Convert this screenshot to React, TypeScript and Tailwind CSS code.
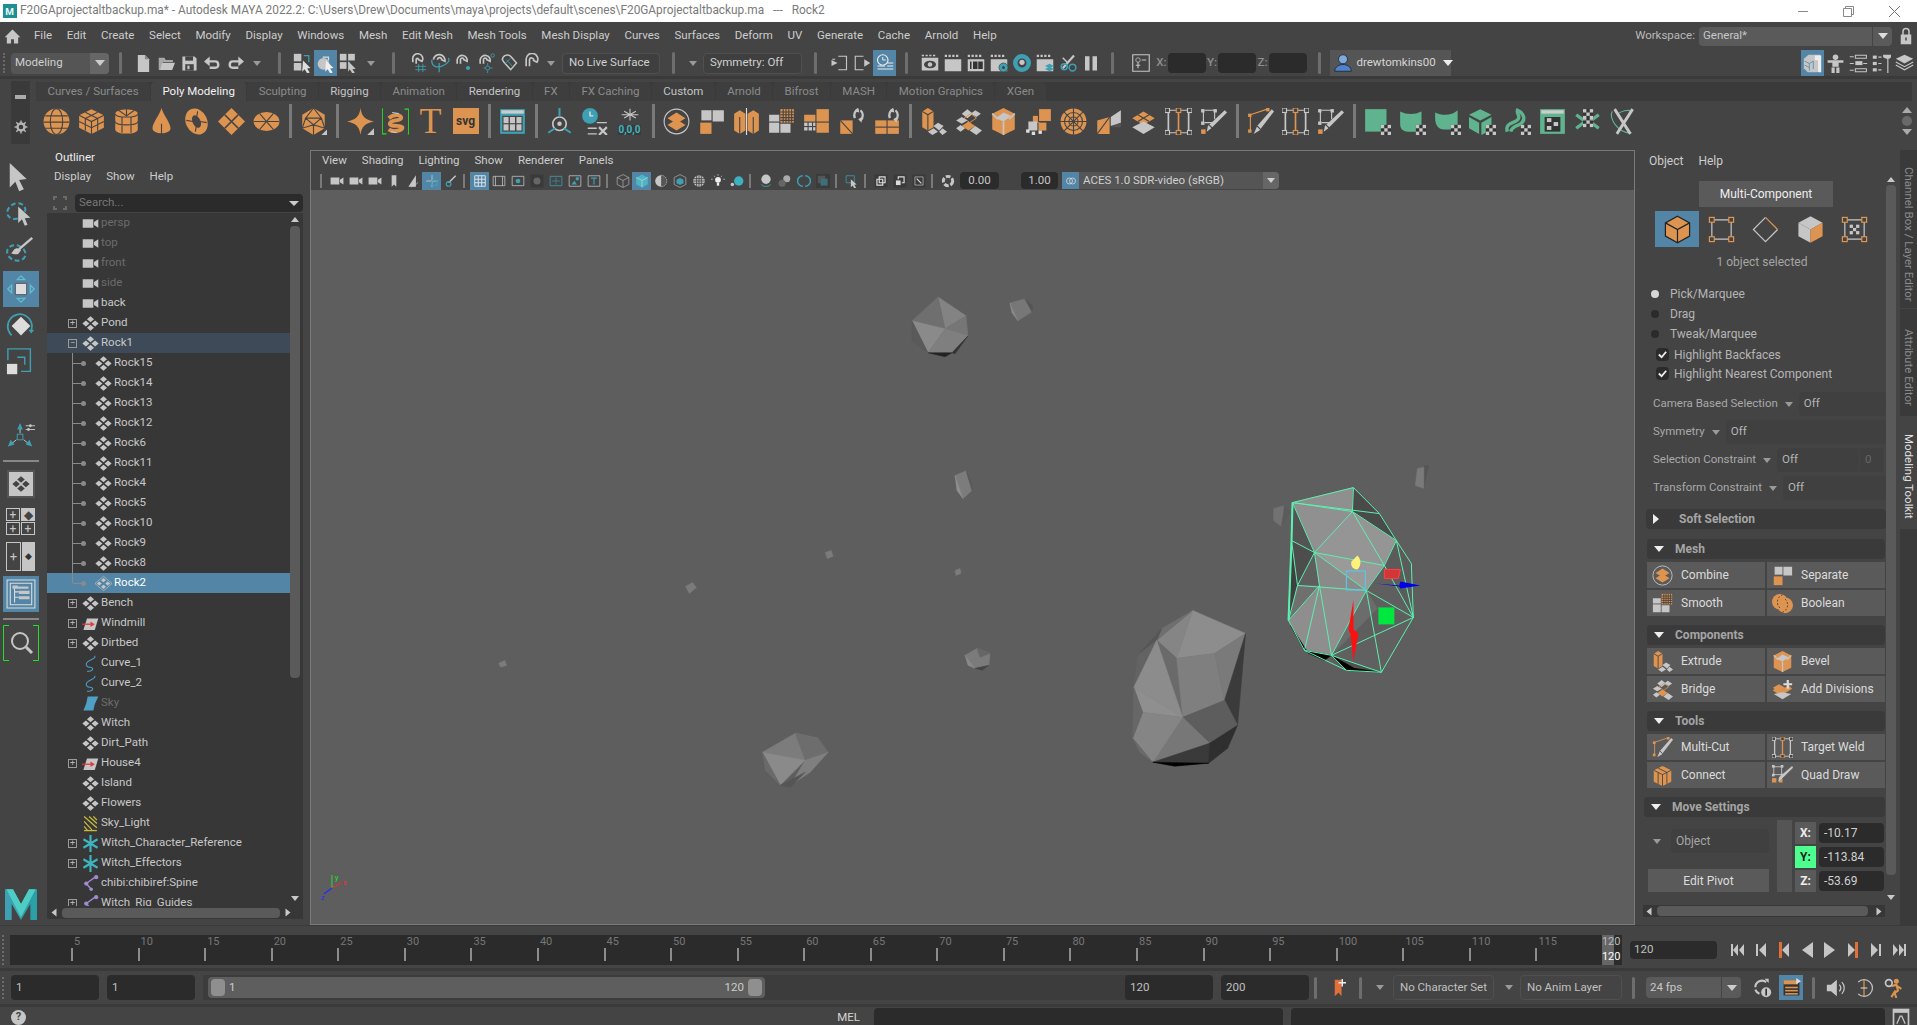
import React from 'react';

const O = '#dd9450';
const G = '#c6c6c6';
const D = '#444444';
const T = '#3ea0b3';
const N = '#5fb38e';

const r = (x: number, y: number, w: number, h: number, f: string) => <rect x={x} y={y} width={w} height={h} fill={f} />;
const ln = (d: string, c = D, w = 1) => <path d={d} stroke={c} strokeWidth={w} fill="none" />;
const fl = (d: string, f = O) => <path d={d} fill={f} />;
const checker = (x: number, y: number) => (
  <>
    {r(x, y, 9, 9, '#333')}
    {r(x, y, 3, 3, G)}{r(x + 6, y, 3, 3, G)}{r(x + 3, y + 3, 3, 3, G)}{r(x, y + 6, 3, 3, G)}{r(x + 6, y + 6, 3, 3, G)}
  </>
);
const corner = <path d="M24 19v5h-5z" fill={G} />;

const ICONS: Record<string, React.ReactNode> = {
  // shelf
  sphere: <><circle cx="12" cy="12" r="11.5" fill={O} /><ellipse cx="12" cy="12" rx="5.5" ry="11.5" fill="none" stroke={D} />{ln('M2 7h20M.5 12.5h23M2 18h20')}</>,
  cube: <>{fl('M12 1 23 6.5v11L12 23 1 17.5v-11z')}{ln('M1 6.5 12 12l11-5.5M12 12v11M6.5 3.7l11 5.6M17.5 3.7 6.5 9.3M6.5 9.3v11M17.5 9.3v11M1 12l11 5.5L23 12')}</>,
  cyl: <>{fl('M2 5c0-5 20-5 20 0v14c0 5-20 5-20 0z')}{ln('M2 5c0 4 20 4 20 0M2 12c0 4 20 4 20 0M8 8v14M16 8v14M12 1v6M5 2l7 5 7-5')}</>,
  cone: <>{fl('M12 0c1.5 6 8 13 8 18 0 6-16 6-16 0 0-5 6.5-12 8-18z')}{ln('M12 14v9')}</>,
  torus: <><ellipse cx="12" cy="12" rx="6.5" ry="9" transform="rotate(-25 12 12)" fill="none" stroke={O} strokeWidth="6" />{ln('M3 11l6 1M13 3l-1 6M21 13l-6-1M11 21l1-6')}</>,
  plane: <>{fl('M12 0 24 12 12 24 0 12z')}{ln('M6 6l12 12M18 6 6 18', D, 1.5)}</>,
  disc: <><ellipse cx="12" cy="12" rx="11.5" ry="8.5" fill={O} />{ln('M.5 12h23M6 5l12 14M18 5 6 19')}</>,
  ico: <>{fl('M12 0 22 6v12l-10 6-10-6V6z')}{ln('M12 0 5 9h14zM5 9 2 18l10-3zM19 9l3 9-10-3zM5 9l7 6 7-6M12 15v9')}{corner}</>,
  star: <>{fl('M12 0c1 7.5 4 10.5 12 12-8 1.5-11 4.5-12 12-1-7.5-4-10.5-12-12C8 10.5 11 7.5 12 0z')}{fl('M24 18v6h-6z', G)}</>,
  helix: <><path d="M1 1H.3v22H4M23 23h.7V1H20" stroke="#22e022" fill="none" /><path d="M6 9c6-5 12-2 11 0-1 3-10 1-10 5 0 3 10 1 11 3 1 3-8 5-12 2" stroke={O} strokeWidth="3.5" fill="none" /><path d="M9 4l6 1M8 21l5 1" stroke={G} fill="none" /></>,
  table: <>{r(1, 1, 22, 22, T)}{r(2, 2, 20, 3, '#ccc')}{r(3, 7, 18, 14, '#444')}{r(4, 8, 4.5, 5.5, G)}{r(9.7, 8, 4.5, 5.5, G)}{r(15.5, 8, 4.5, 5.5, G)}{r(4, 14.5, 4.5, 5.5, G)}{r(9.7, 14.5, 4.5, 5.5, G)}{r(15.5, 14.5, 4.5, 5.5, G)}</>,
  locator: <><circle cx="12" cy="14" r="6" fill="none" stroke={G} strokeWidth="1.5" /><circle cx="12" cy="14" r="2" fill={G} />{ln('M12 0v8M2 22l6-4M22 22l-6-4', T, 1.8)}</>,
  clockx: <><circle cx="8" cy="7" r="7" fill={T} />{ln('M8 3v4h3', '#ddd', 1.3)}{ln('M14 13h9M6 18h8M6 23h8', G, 1.3)}{ln('M16 17l7 7M23 17l-7 7', G, 2)}</>,
  snow: <>{ln('M12 1v14M5 4l14 8M19 4 5 12M2 8h20', G, 1.3)}</>,
  combine: <><circle cx="12" cy="12" r="11" fill="none" stroke={G} />{fl('M12 4l8 5-8 5-8-5z')}{fl('M12 10l8 5-8 5-8-5z')}</>,
  separate: <>{r(13, 2, 10, 10, G)}{r(3, 2, 9, 9, G)}{r(2, 13, 10, 10, O)}</>,
  mirror: <>{fl('M6 2l5 3v15l-5 3-5-3V5z')}{fl('M18 2l5 3v15l-5 3-5-3V5z')}{ln('M6 8v15M18 8v15')}{ln('M12 0v24', '#ddd', 1)}</>,
  smooth: <>{r(11, 1, 12, 12, O)}{ln('M13.5 1v12M16 1v12M18.5 1v12M21 1v12M11 3.5h12M11 6h12M11 8.5h12M11 11h12')}{r(1, 13, 9, 9, G)}{r(11, 14, 9, 8, G)}{r(1, 6, 9, 6, G)}</>,
  reduce: <>{r(12, 1, 11, 11, O)}{r(1, 6, 10, 6, O)}{r(12, 13, 11, 9, O)}{r(1, 13, 3, 3, G)}{r(5, 13, 3, 3, G)}{r(1, 17, 3, 3, G)}{r(5, 17, 3, 3, G)}{r(9, 13, 2, 3, G)}{r(9, 17, 2, 3, G)}</>,
  tri: <>{fl('M2 11h11v12H2z')}{ln('M2 11l11 12')}{ln('M15 9a6 6 0 0 1 3-8M20 2a6 6 0 0 1 0 9', G, 2)}{fl('M18 10l3 3v-5zM18 0l-3 3 4 1z', G)}</>,
  quads: <>{r(2, 11, 10, 12, O)}{r(13, 11, 10, 12, O)}{ln('M2 17h21')}{ln('M15 9a6 6 0 0 1 3-8M20 2a6 6 0 0 1 0 9', G, 2)}{fl('M18 10l3 3v-5zM18 0l-3 3 4 1z', G)}</>,
  extrude: <>{fl('M2 3l5-3 5 3v14l-5 3-5-3z')}{ln('M2 3l5 3 5-3M7 6v14')}{fl('M12 16l4-3 5 3-4 4zM7 21l5-3 4 3-5 3zM17 21l3-3 4 3-4 3z', G)}</>,
  bridge: <>{fl('M6 5l5-4 5 4-5 4zM14 5l4-3 5 3-4 3z', G)}{ln('M8 9l6-4 5 4-6 4z', O, 0.8)}{fl('M1 11l5-3 5 3-5 3z', G)}{fl('M6 16l6-4 6 4-6 4z')}{fl('M1 18l4-3 4 3-4 3zM13 20l5-4 6 4-5 4z', G)}</>,
  bevel: <>{fl('M12 0l10 5v14l-10 5-10-5V5z')}{fl('M12 4l7 3-7 5-7-3z', G)}{ln('M12 12v12M2 5l5 5M22 5l-5 5', G, 1.5)}</>,
  append: <>{r(12, 1, 11, 11, O)}{r(7, 7, 6, 6, O)}{r(3, 12, 8, 8, G)}{r(12, 13, 7, 7, O)}{ln('M12 1v11h11')}{r(1, 19, 3, 3, '#ddd')}{r(6, 21, 3, 3, '#ddd')}{r(12, 20, 3, 3, '#ddd')}</>,
  circ: <><circle cx="12" cy="12" r="11.5" fill={O} />{ln('M12 0v24M0 12h24M3.5 3.5l17 17M20.5 3.5l-17 17')}<circle cx="12" cy="12" r="4" fill="none" stroke={D} /><circle cx="12" cy="12" r="8" fill="none" stroke={D} /></>,
  fill: <>{fl('M2 11l11-3v15H2z')}{ln('M2 23 13 8')}{fl('M14 8l9-6v11l-9 3z', G)}{fl('M14 17h9V13z', '#555')}</>,
  addDiv: <>{fl('M12 3l10 6-10 6-10-6z')}{ln('M7 6l10 6M17 6 7 12')}{fl('M12 12l10 5-10 6-10-6z', G)}</>,
  weld: <>{ln('M3 3v18M21 3v18', G, 1.5)}{ln('M12 3v18', O, 1.5)}{ln('M2 2h20M2 22h20', G, 1)}{[2, 12, 22].map((x) => <g key={x}><rect x={x - 2} y="0" width="4" height="4" fill={D} stroke={x === 12 ? O : G} /><rect x={x - 2} y="20" width="4" height="4" fill={D} stroke={x === 12 ? O : G} /></g>)}</>,
  quad: <>{ln('M4 2h9M4 13h9', G, 1)}{ln('M3 3v10M13 3v7', G, 1)}{r(1, 1, 3, 3, G)}{r(12, 1, 3, 3, G)}{r(1, 12, 3, 3, G)}{r(1, 19, 4, 4, O)}{fl('M22 2l2 2-14 14-4 3 1-5z', G)}{ln('M8 15l3 3', D, 1)}</>,
  cut: <>{ln('M3 6v15M3 6l15-5', O, 1)}{r(1, 5, 3, 3, O)}{r(1, 19, 3, 3, O)}{r(17, 0, 3, 3, O)}{fl('M24 3l-2-2L9 16l-3 7 5-3z', G)}{ln('M9 16l3 3', D, 1)}</>,
  connect: <>{fl('M12 1l10 5v13l-10 5-10-5V6z')}{ln('M2 6l10 5 10-5M12 11v13M7 3.5l10 5M7 8.5v13M17 8.5v13')}</>,
  green1: <>{fl('M1 1h19v20H1z', N)}{checker(15, 15)}</>,
  green2: <>{fl('M1 3c6 3 13 3 19 0v18H8c-5 0-7-3-7-7z', N)}{checker(15, 15)}</>,
  green3: <>{fl('M1 4c6 3 15 3 20-2v17H9C4 19 1 15 1 9z', N)}{checker(15, 15)}</>,
  green4: <>{fl('M10 1l10 5-10 5L0 6z', N)}{fl('M0 8l9 5v10l-9-5zM11 13l9-5v8h-5v6l-4 2z', N)}{checker(15, 15)}</>,
  green5: <><path d="M3 21C0 12 12 14 13 9c1-3-2-4-1-7 5 2 8 8 3 12-3 2-8 2-9 7" stroke={N} strokeWidth="3" fill="none" />{checker(15, 15)}</>,
  green6: <>{r(1, 1, 22, 22, N)}{r(2, 2, 20, 3, '#ccc')}{r(5, 8, 14, 13, '#333')}{r(7, 9, 4, 3.5, G)}{r(13, 12.5, 4, 3.5, G)}{r(7, 16, 4, 3.5, G)}</>,
  green7: <>{ln('M2 6l8 6-8 6M22 6l-8 6 8 6', N, 3)}{checker(8, 8)}{checker(8, 1)}</>,
  green8: <><path d="M3 3C-1 8 8 23 20 22M20 3c-3-2-9 0-12 2" stroke={N} fill="none" />{ln('M5 1l14 22M21 1 7 23', G, 2.5)}</>,
  // status
  newf: <>{fl('M4 0h10l6 6v18H4z', G)}{fl('M14 0l6 6h-6z', '#888')}</>,
  open: <>{fl('M1 4h8l2 3h10v3H7l-3 11H1z', '#a8a8a8')}{fl('M6 11h18l-4 10H3z', G)}</>,
  save: <>{fl('M2 2h17l3 3v17H2z', G)}{r(6, 2, 11, 6, '#444')}{r(6, 13, 12, 9, '#444')}{r(9, 15, 3, 5, G)}</>,
  undo: <>{ln('M3 9h13c5 0 6 9 0 9H8', G, 3.5)}{fl('M8 2v14L0 9z', G)}</>,
  redo: <>{ln('M21 9H8c-5 0-6 9 0 9h8', G, 3.5)}{fl('M16 2v14l8-7z', G)}</>,
  sel1: <>{r(1, 1, 9, 9, G)}{r(1, 12, 9, 9, G)}{ln('M13 3h6v8', T, 1.5)}{fl('M12 9l9 9-4 .5 3 5-3 1-3-5-3 3z', '#ddd')}</>,
  sel2: <><circle cx="9" cy="13" r="7" fill={G} />{ln('M8 5h7v4', '#ddd', 1.5)}{fl('M12 9l9 9-4 .5 3 5-3 1-3-5-3 3z', '#eee')}</>,
  sel3: <>{r(1, 1, 8, 8, G)}{r(11, 1, 8, 8, G)}{r(1, 11, 8, 8, G)}{r(11, 11, 2, 2, T)}{fl('M11 10l9 9-4 .5 3 4-3 1-3-5-2 3z', G)}</>,
  mag1: <>{ln('M7 11V8a6 6 0 1 1 11 2l-4-2a1.5 1.5 0 1 0-3 0v5', G, 2)}{ln('M14 13v10M19 13v10M10 16h13M10 20h13', T, 1)}</>,
  mag2: <>{ln('M4 8a7 7 0 1 1 14 2L14 8a1.5 1.5 0 1 0-5 0', G, 2)}<path d="M2 8c0 10 8 10 14 7s8-6 6-9M11 12v11" stroke={T} fill="none" strokeWidth="1.5" /></>,
  mag3: <>{ln('M5 13V8a6 6 0 1 1 12 2l-4-2a2 2 0 1 0-4 0v5', G, 2)}<circle cx="18" cy="18" r="2.5" fill={T} /></>,
  mag4: <>{ln('M5 13V8a6 6 0 1 1 12 2l-4-2a2 2 0 1 0-4 0v5', G, 2)}<circle cx="20" cy="3" r="2" fill="none" stroke={T} /><circle cx="14" cy="18" r="2.5" fill="none" stroke={T} />{ln('M14 15v-3M14 21v3M9 18h2M17 18h3', T, 1)}</>,
  mag5: <>{ln('M4 8a6 6 0 0 1 10-4l7 8-7 8-8-9z', G, 1.8)}{ln('M9 8l8 9M14 6l-7 7', T, 1)}</>,
  mag6: <>{ln('M5 16V8a7 7 0 1 1 13 3l-4-2a2.5 2.5 0 1 0-5-1v8', G, 2)}</>,
  hist1: <>{ln('M11 3h11v18H11M3 7h4', G, 1.5)}{fl('M2 8l8 4-8 4z', G)}</>,
  hist2: <>{ln('M14 3H3v18h11', G, 1.5)}{fl('M15 7l8 5-8 5z', G)}</>,
  hist3: <><circle cx="9" cy="8" r="7" fill="none" stroke="#eee" strokeWidth="1.5" />{ln('M9 4v4h4', '#eee', 1.3)}{ln('M15 12h8M15 16h8M2 20h21M2 16h10', '#eee', 1.5)}</>,
  rv1: <>{r(1, 5, 22, 17, G)}{r(1, 1, 3, 2, G)}{r(6, 1, 3, 2, G)}{r(11, 1, 3, 2, G)}{r(16, 1, 3, 2, G)}<ellipse cx="12" cy="14" rx="8" ry="5" fill="#444" /><circle cx="12" cy="14" r="3" fill={G} /></>,
  rv2: <>{r(1, 7, 22, 16, G)}{r(1, 1, 3, 3, G)}{r(6, 1, 3, 3, G)}{r(11, 1, 3, 3, G)}{r(16, 1, 3, 3, G)}</>,
  rv3: <>{r(1, 7, 22, 16, G)}{r(1, 1, 3, 3, G)}{r(6, 1, 3, 3, G)}{r(11, 1, 3, 3, G)}{r(16, 1, 3, 3, G)}{r(4, 10, 2, 10, '#333')}{r(8, 10, 6, 10, '#333')}{r(15, 10, 6, 10, '#333')}</>,
  rv4: <>{r(1, 7, 22, 16, G)}{r(1, 1, 3, 3, G)}{r(6, 1, 3, 3, G)}{r(11, 1, 3, 3, G)}{r(16, 1, 3, 3, G)}<circle cx="18" cy="18" r="6" fill={T} stroke="#444" /><circle cx="18" cy="18" r="2" fill="#444" /></>,
  rv5: <><circle cx="12" cy="12" r="9" fill="none" stroke={T} strokeWidth="6" /><circle cx="12" cy="11" r="3.5" fill={G} /></>,
  rv6: <>{r(1, 7, 22, 16, G)}{r(1, 1, 3, 3, G)}{r(6, 1, 3, 3, G)}{r(11, 1, 3, 3, G)}{r(16, 1, 3, 3, G)}{fl('M18 13l6 3-6 3-6-3z', T)}{fl('M18 17l6 3-6 3-6-3z', T)}</>,
  rv7: <>{ln('M5 19 20 2', G, 3)}{ln('M5 5l6 6', G, 2)}<circle cx="7" cy="17" r="4" fill="none" stroke={T} strokeWidth="2" /><circle cx="18" cy="18" r="4.5" fill="none" stroke={T} strokeWidth="2" /></>,
  pause: <>{r(4, 3, 6, 19, G)}{r(14, 3, 6, 19, G)}</>,
  sn: <>{ln('M1 1h22v22H1z', G, 1.5)}<circle cx="8" cy="8" r="3" fill="none" stroke={G} />{ln('M8 11v8M5 15h6M13 8h6', G, 1.5)}</>,
  user: <><circle cx="12" cy="7" r="6" fill="#7ea9d9" stroke="#123" /><path d="M1 23c0-6 6-9 11-9s11 3 11 9z" fill="#4f82c8" stroke="#123" /></>,
  cb: <>{fl('M1 6l6-5h15v18l-4 4H6l-5-5z', G)}{fl('M15 2h8v6h-8zM19 8h4v15h-4z', '#eee')}{ln('M2 9l6 3v9M2 14l6 3M8 12l5-3v10', '#5285a6', 1)}</>,
  person: <><circle cx="12" cy="4" r="3.5" fill={G} />{fl('M2 8h20v3h-6v5H8v-5H2z', G)}{r(7, 17, 4, 7, G)}{r(13, 17, 4, 7, G)}</>,
  ae: <>{ln('M8 1.5h14v4H8zM8 18.5h14v4H8z', G, 1.3)}{ln('M1 3.5h5M1 20.5h5M1 12h5M18 12h5', G, 1.3)}<rect x="8" y="9" width="9" height="5" fill={G} /></>,
  te: <>{r(1, 2, 5, 4, G)}{r(1, 10, 5, 4, G)}{r(1, 18, 5, 4, G)}{ln('M8 4h4M8 12h4M8 20h4M20 2v22', G, 1.5)}{fl('M14 1h10v3l-2 2h-4l-4-2z', G)}</>,
  layers: <>{fl('M12 1l11 5-11 6L1 6z', G)}{ln('M1 10l11 6 11-6M1 14l11 6 11-6', G, 1.5)}</>,
  // toolbox
  arrow: <>{fl('M4 0l18 17-8 1 5 10-5 2-4-10-6 6z', G)}</>,
  lasso: <><ellipse cx="11" cy="13" rx="10" ry="8" transform="rotate(-25 11 13)" fill="none" stroke={T} strokeWidth="2.2" strokeDasharray="5 3" />{fl('M13 8l13 12-6 .5 3 7-3 1-3-7-4 4z', G)}</>,
  paint: <><ellipse cx="11" cy="17" rx="10" ry="8" transform="rotate(20 11 17)" fill="none" stroke={T} strokeWidth="2.2" strokeDasharray="5 3" />{ln('M14 13 28 1', G, 2.5)}{fl('M8 14c3-3 6-2 8 0l-3 4c-2 1-6 0-8-1 1 0 2-1 3-3z', G)}</>,
  move: <>{r(10, 10, 12, 12, '#ddd')}{ln('M10 10h12v12H10z', '#555')}{ln('M12 6l4-4 4 4zM12 26l4 4 4-4zM6 12l-4 4 4 4zM26 12l4 4-4 4z', '#63bccd', 1.5)}</>,
  rotate: <>{fl('M16 6l10 10-10 10L6 16z', '#ddd')}<path d="M6 26A13 13 0 1 1 27 21" fill="none" stroke={T} strokeWidth="1.8" />{fl('M24 20h6l-3 4z', T)}</>,
  scale: <>{r(1, 18, 11, 11, '#ddd')}{ln('M2 14V2h24v24H16', T, 1.5)}{ln('M12 11h8v8', T, 1.5)}</>,
  soft: <><rect x="12" y="13" width="6" height="6" fill="none" stroke={T} />{ln('M15 12V4M11 19l-6 5M19 19l6 5', G, 1)}{fl('M15 1l3 7h-6zM2 26l3-7 4 5zM28 26l-3-7-4 5z', T)}{ln('M21 4h10M21 8h10', G, 1)}<circle cx="26" cy="4" r="1.5" fill={G} /><circle cx="24" cy="8" r="1.5" fill={G} /></>,
  m: <>{fl('M0 24V1h6l6 11v12L5 12v12z', T)}{fl('M24 24V1h-6l-6 11v12l7-12v12z', '#2a9fa8')}{fl('M6 1l6 11 6-11h5L12 22 1 1z', '#4ecdc4')}</>,
  xf: <g transform="translate(0 1.8) scale(1 .85)">{fl('M12 0l5 5-5 5-5-5zM5.500 7 10.500 12l-5 5-5-5zM18.500 7l5 5-5 5-5-5zM12 14l5 5-5 5-5-5z', G)}</g>,
  xfsel: <g transform="translate(0 1.8) scale(1 .85)"><path d="M12 0 24 12 12 24 0 12z" fill="none" stroke={G} />{fl('M12 3l3.5 3.5L12 10 8.5 6.5zM6 8.5 9.5 12 6 15.5 2.5 12zM18 8.5 21.5 12 18 15.5 14.5 12zM12 14l3.5 3.5L12 21l-3.5-3.5z', G)}</g>,
  camera: <>{r(1, 6, 15, 12, G)}{fl('M17 10l6-4v12l-6-4z', G)}</>,
  ref: <>{fl('M7 5h16l-5 16H2z', G)}{ln('M0 13h13', '#e23a3a', 1.8)}{fl('M12 9l6 4-6 4z', '#e23a3a')}</>,
  curve: <path d="M18 1c3 5-12 6-12 12s8 3 9 6-4 4-8 4" fill="none" stroke="#4f9fc6" strokeWidth="1.5" />,
  nurbs: <path d="M8 2h15l-5 11-2 9H2l4-10z" fill="#4f9fc6" />,
  light: <>{ln('M3 2l18 16M10 2l11 10M3 9l11 12M3 16l5 6M16 2l5 5', '#c9bb3c', 1.8)}{ln('M3 22h18', '#c9bb3c', 1.8)}</>,
  star6: <>{ln('M12 0v24M2 6l20 12M22 6 2 18', '#3fb5c0', 3)}</>,
  joint: <><path d="M20 2 6 12l7 8" fill="none" stroke="#a08bd0" strokeWidth="2" /><circle cx="20" cy="3" r="3" fill="#a08bd0" /><circle cx="6" cy="12" r="3" fill="#a08bd0" /><circle cx="13" cy="20" r="2.5" fill="#a08bd0" /></>,
  // modeling toolkit
  mtObj: <>{fl('M12 1l10 5.5v11L12 23 2 17.5v-11z')}<path d="M2 6.5 12 12l10-5.5M12 12v11M12 1 22 6.5v11L12 23 2 17.5v-11z" fill="none" stroke="#222" /></>,
  mtVert: <>{ln('M4 4h16v16H4z', G, 1)}{[[4, 4], [20, 4], [4, 20], [20, 20]].map(([x, y]) => <rect key={`${x}${y}`} x={x - 2} y={y - 2} width="4" height="4" fill={D} stroke={O} strokeWidth="1" />)}</>,
  mtEdge: <>{ln('M12 2 2 12l10 10 10-10', G, 1)}{ln('M12 2l10 10', O, 1)}</>,
  mtFace: <>{fl('M12 1l10 5.5L12 12 2 6.5z', G)}{fl('M2 6.5 12 12v11L2 17.5z', G)}{fl('M22 6.5 12 12v11l10-5.5z')}</>,
  mtUv: <>{ln('M4 4h16v16H4z', G, 1)}{[[4, 4], [20, 4], [4, 20], [20, 20]].map(([x, y]) => <rect key={`${x}${y}`} x={x - 2} y={y - 2} width="4" height="4" fill={D} stroke={O} strokeWidth="1" />)}{r(8, 8, 2.7, 2.7, G)}{r(13.3, 8, 2.7, 2.7, G)}{r(10.7, 10.7, 2.7, 2.7, G)}{r(8, 13.3, 2.7, 2.7, G)}{r(13.3, 13.3, 2.7, 2.7, G)}</>,
  boolean: <><circle cx="9" cy="10" r="9" fill={O} /><circle cx="15" cy="14" r="9" fill={O} /><path d="M12 2a9 9 0 0 0-3 15M12 22a9 9 0 0 0 3-15" stroke="#333" strokeDasharray="2 2" fill="none" /></>,
  addDivPlus: <>{fl('M8 6l7 4-7 5-7-5z')}{fl('M10 13l9-6 4 4-13 8-9-6 2-2z', O)}{fl('M12 15l10 2-10 6L2 17z', G)}{ln('M18 1v10M13 6h10', '#ddd', 2.5)}</>,
  quadDraw: <>{ln('M2 2h9v9H2z', G, 1)}{r(0, 0, 3, 3, G)}{r(10, 0, 3, 3, G)}{r(0, 10, 3, 3, G)}{r(10, 10, 3, 3, G)}{r(0, 15, 5, 5, O)}{r(8, 16, 4, 4, O)}{fl('M23 1l1 2-13 13-4 3 1-5z', G)}</>,
  // playback
  bookmark: <>{fl('M5 1h9v22l-4-5-5 5z', '#e0703a')}{ln('M15 0v10M10 5h10', '#eee', 2)}</>,
  loop: <>{ln('M4 11a8 8 0 0 1 13-6M4 14a8 8 0 0 0 5 5', G, 2.5)}{fl('M15 1h5v5z', G)}<circle cx="17" cy="17" r="6" fill={G} />{ln('M17 13v8', '#333', 2)}</>,
  cache: <>{r(2, 4, 20, 18, '#333')}{r(2, 3, 18, 5, O)}{r(4, 11, 16, 2, O)}{r(4, 15, 16, 2, O)}{r(4, 19, 16, 2, O)}{fl('M18 0l6 4-6 4z', '#ddd')}</>,
  speaker: <>{fl('M1 8h5l7-6v20l-7-6H1z', G)}{ln('M16 8a6 6 0 0 1 0 8M19 5a10 10 0 0 1 0 14', G, 1.5)}</>,
  clockdash: <><path d="M5 5a10 10 0 1 1 0 14" fill="none" stroke={G} strokeWidth="1.5" />{ln('M12 2v20', O, 1.5)}{ln('M8 12h8', G, 1.5)}</>,
  runner: <><circle cx="16" cy="4" r="3" fill={O} />{ln('M10 10l6-2 2 7-4 3 2 6M15 15l-5 8M16 9l6 4', O, 2.5)}<circle cx="7" cy="6" r="4" fill="none" stroke={G} strokeWidth="2" /></>,
  // viewport panel
  bm: fl('M8 2h8v20l-4-4-4 4z', G),
  film: <>{fl('M4 22 17 2v20z', G)}{ln('M8 22c6 0 10-3 12-8', G, 1)}</>,
  mv: <>{ln('M12 2v20M2 12h20', G, 1.5)}<circle cx="16" cy="15" r="5" fill="none" stroke={T} strokeWidth="2" /></>,
  paintv: <>{ln('M8 15 20 3', G, 2.5)}<circle cx="8" cy="17" r="4" fill="none" stroke={T} strokeWidth="2" /></>,
  grid: <>{ln('M3 3h18v18H3zM9 3v18M15 3v18M3 9h18M3 15h18', '#eee', 1.5)}</>,
  film2: <>{ln('M2 4h20v16H2zM6 4v16M18 4v16', G, 1.3)}</>,
  dot: <>{ln('M2 4h20v16H2z', G, 1.3)}<circle cx="12" cy="12" r="4" fill={T} /></>,
  dot2: <>{r(1, 1, 22, 22, '#3a3a3a')}<circle cx="12" cy="12" r="6" fill="#666" /></>,
  tv: <>{ln('M2 4h20v16H2z', T, 1.3)}{ln('M12 6v12M5 12h14', T, 1)}</>,
  cam2: <>{ln('M2 3h20v18H2z', G, 1.3)}{fl('M6 18l5-7 4 7z', T)}<circle cx="16" cy="8" r="3" fill={T} /></>,
  tbox: <>{ln('M2 3h20v18H2z', G, 1.3)}{ln('M7 7h10M12 7v11', T, 2)}</>,
  wire: <>{ln('M12 1l10 5v12l-10 5-10-5V6zM2 6l10 5 10-5M12 11v12', G, 1)}</>,
  solid: <>{fl('M12 1l10 5v12l-10 5-10-5V6z', '#4db4c4')}{ln('M2 6l10 5 10-5M12 11v12', '#ddd', 1)}</>,
  half: <><circle cx="12" cy="12" r="10" fill={G} /><path d="M12 2a10 10 0 0 1 0 20z" fill="#555" stroke={G} strokeDasharray="2 2" /></>,
  wire2: <>{ln('M12 1l10 5v12l-10 5-10-5V6z', G, 1)}{fl('M12 7l6 3v6l-6 3-6-3v-6z', T)}</>,
  chk: <><circle cx="12" cy="12" r="10" fill={G} />{ln('M2 8h20M2 12h20M2 16h20M8 2v20M12 2v20M16 2v20', '#444', 1.5)}</>,
  bulb: <><circle cx="12" cy="10" r="5" fill="#eee" />{r(10, 15, 4, 5, '#eee')}{ln('M12 0v3M3 9H0M24 9h-3M5 3l2 2M19 3l-2 2', G, 1.3)}</>,
  sph: <><circle cx="15" cy="12" r="8" fill="#3fb0c0" /><circle cx="4" cy="18" r="3" fill={G} /></>,
  ball: <><circle cx="12" cy="9" r="8" fill={G} />{ln('M4 18l4 3h8l4-3', T, 1.5)}</>,
  ball2: <><circle cx="15" cy="8" r="6" fill="#aaa" /><circle cx="7" cy="16" r="6" fill="#666" /></>,
  ring: <><path d="M10 3a9 9 0 0 0 0 18M14 3a9 9 0 0 1 0 18" fill="none" stroke={T} strokeWidth="2.5" /></>,
  sq: <>{r(0, 0, 24, 24, '#3a3a3a')}{r(3, 3, 13, 13, '#555')}{r(8, 8, 12, 12, '#3e6e7a')}</>,
  selc: <>{ln('M2 3h14v12H2z', T, 1.3)}{fl('M10 9l10 9-4 .5 3 5-3 1-3-5-3 3z', G)}</>,
  pg1: <>{r(1, 1, 22, 22, '#3a3a3a')}{ln('M9 5h10v10H9zM5 9h10v10H5z', '#ddd', 2)}</>,
  pg2: <>{r(1, 1, 22, 22, '#3a3a3a')}{r(5, 11, 8, 8, '#ddd')}{ln('M9 9V5h10v10h-4', '#ddd', 2)}</>,
  pg3: <>{r(1, 1, 22, 22, '#3a3a3a')}{ln('M5 5h14v14H5z', '#ddd', 1)}{ln('M8 8l8 8', '#ddd', 2)}</>,
};

const TOOL_VB: Record<string, string> = { arrow: '0 0 32 32', lasso: '0 0 32 32', paint: '0 0 32 32', move: '0 0 32 32', rotate: '0 0 32 32', scale: '0 0 32 32', soft: '0 0 32 32' };
const Ic = ({ n, s = 24, className = '' }: { n: string; s?: number; className?: string }) => (
  <svg viewBox={TOOL_VB[n] ?? '0 0 24 24'} width={s} height={s} className={`shrink-0 ${className}`}>{ICONS[n]}</svg>
);

const Tri = ({ className = '' }: { className?: string }) => (
  <span className={`block w-0 h-0 shrink-0 border-x-[4px] border-t-[5px] border-x-transparent border-t-[#9a9a9a] ${className}`} />
);
const Sep = ({ className = '' }: { className?: string }) => (
  <span className={`block shrink-0 w-[3px] h-[22px] rounded-sm bg-[#6e6e6e] ${className}`} />
);
const Grip = ({ className = '' }: { className?: string }) => (
  <span className={`block shrink-0 w-[3px] border-l-2 border-dotted border-[#6a6a6a] ${className}`} />
);
const Cells = ({ names, w = 'w-[23px]', s = 20, sel = -1 }: { names: string[]; w?: string; s?: number; sel?: number }) => (
  <>
    {names.map((n, i) => (
      <span key={n + i} className={`flex items-center justify-center shrink-0 h-[26px] ${w} ${i === sel ? 'bg-[#5285a6]' : ''}`}>
        <Ic n={n} s={s} />
      </span>
    ))}
  </>
);

const MENUS = ['File', 'Edit', 'Create', 'Select', 'Modify', 'Display', 'Windows', 'Mesh', 'Edit Mesh', 'Mesh Tools', 'Mesh Display', 'Curves', 'Surfaces', 'Deform', 'UV', 'Generate', 'Cache', 'Arnold', 'Help'];

const TitleBar = () => (
  <div className="flex items-center h-[22px] bg-white shrink-0 pl-[3px]">
    <svg viewBox="0 0 24 24" width="14" height="14"><rect width="24" height="24" fill="#1e8f92" /><text x="4" y="18" fontSize="17" fontWeight="700" fill="#e8fbfa" fontFamily="Roboto">M</text></svg>
    <span className="ml-[3px] text-[11.85px] text-[#7a7a7a] whitespace-pre">F20GAprojectaltbackup.ma* - Autodesk MAYA 2022.2: C:\Users\Drew\Documents\maya\projects\default\scenes\F20GAprojectaltbackup.ma   ---   Rock2</span>
    <div className="ml-auto flex items-center">
      <span className="block w-[10px] h-px bg-[#888] mr-[35px]" />
      <svg width="11" height="11" viewBox="0 0 11 11" className="mr-[35px]"><path d="M.5 2.5h8v8h-8zM2.5 2.5v-2h8v8h-2" fill="none" stroke="#888" /></svg>
      <svg width="11" height="11" viewBox="0 0 11 11" className="mr-[17px]"><path d="M0 0l11 11M11 0 0 11" stroke="#777" /></svg>
    </div>
  </div>
);

const MenuBar = () => (
  <div className="flex items-center h-[28px] shrink-0 pl-[4px]">
    <svg viewBox="0 0 24 24" width="17" height="17"><path d="M12 2 1 13h3v9h6v-6h4v6h6v-9h3z" fill="#c6c6c6" /></svg>
    <div className="ml-[13px] flex gap-[14.7px]">
      {MENUS.map((m) => <span key={m}>{m}</span>)}
    </div>
    <span className="ml-auto text-[#b9b9b9]">Workspace:</span>
    <div className="ml-[4px] flex items-center justify-between w-[193px] h-[19px] rounded-sm bg-[#5a5a5a] pl-[4px] text-[#c8c8c8]">
      General*
      <span className="flex items-center justify-center w-[20px] h-full border-l border-[#444]"><Tri className="border-t-[#ddd] border-x-[5px] border-t-[6px]" /></span>
    </div>
    <svg viewBox="0 0 24 24" width="18" height="18" className="ml-[5px] mr-[2px]"><path d="M8 11V6a4 4 0 0 1 8 0v5" stroke="#c6c6c6" strokeWidth="2" fill="none" /><rect x="5" y="10" width="14" height="13" fill="#c6c6c6" /><rect x="11" y="14" width="2" height="4" fill="#444" /></svg>
  </div>
);

const StatusInput = ({ children, w }: { children: React.ReactNode; w: string }) => (
  <span className={`flex items-center h-[21px] pl-[6px] rounded-sm border border-[#505050] bg-[#3f3f3f] text-[#cfcfcf] ${w}`}>{children}</span>
);

const StatusLine = () => (
  <div className="flex items-center h-[26px] shrink-0 border-b-[3px] border-[#3a3a3a] box-content">
    <Grip className="ml-[3px] h-[20px]" />
    <div className="ml-[5px] flex items-center justify-between w-[98px] h-[21px] rounded-sm bg-[#555] pl-[4px] text-[#cfcfcf]">
      Modeling
      <span className="flex items-center justify-center w-[19px] h-full bg-[#666] rounded-r-sm"><Tri className="border-t-[#ccc] border-x-[5px] border-t-[6px]" /></span>
    </div>
    <Sep className="ml-[10px]" />
    <span className="ml-[10px] flex items-center"><Cells names={['newf', 'open', 'save', 'undo', 'redo']} s={17} /></span>
    <Tri className="ml-[6px]" />
    <Sep className="ml-[17px]" />
    <span className="ml-[10px] flex items-center"><Cells names={['sel1', 'sel2', 'sel3']} s={20} sel={1} /></span>
    <Tri className="ml-[7px]" />
    <Sep className="ml-[17px]" />
    <span className="ml-[10px] flex items-center"><Cells names={['mag1', 'mag2', 'mag3', 'mag4', 'mag5', 'mag6']} s={20} /></span>
    <Tri className="ml-[4px]" />
    <span className="ml-[7px]"><StatusInput w="w-[98px]">No Live Surface</StatusInput></span>
    <Sep className="ml-[12px]" />
    <Tri className="ml-[14px]" />
    <span className="ml-[6px]"><StatusInput w="w-[99px]">Symmetry: Off</StatusInput></span>
    <Sep className="ml-[12px]" />
    <span className="ml-[10px] flex items-center"><Cells names={['hist1', 'hist2', 'hist3']} s={18} sel={2} /></span>
    <Sep className="ml-[9px]" />
    <span className="ml-[10px] flex items-center"><Cells names={['rv1', 'rv2', 'rv3', 'rv4', 'rv5', 'rv6', 'rv7', 'pause']} s={18} /></span>
    <Sep className="ml-[9px]" />
    <span className="ml-[18px] mr-[5px]"><Ic n="sn" s={18} /></span>
    {['X:', 'Y:', 'Z:'].map((a) => (
      <span key={a} className="flex items-center w-[50.5px] justify-end text-[#8e8e8e] font-medium gap-[1px]">
        {a}<span className="block w-[38px] h-[20px] rounded-sm bg-[#2b2b2b]" />
      </span>
    ))}
    <Sep className="ml-[11px]" />
    <div className="ml-[9px] flex items-center gap-[5px] w-[121px] h-[26px] bg-[#555] pl-[4px] text-[#d5d5d5]">
      <Ic n="user" s={18} />drewtomkins00<Tri className="border-t-[#eee] border-x-[5px] border-t-[6px] ml-[2px]" />
    </div>
    <div className="ml-auto mr-[1px] flex items-center">
      <Cells names={['cb', 'person', 'ae', 'te', 'layers']} s={19} sel={0} />
    </div>
  </div>
);

const TABS: [string, number][] = [['Curves / Surfaces', 0], ['Poly Modeling', 2], ['Sculpting', 0], ['Rigging', 1], ['Animation', 0], ['Rendering', 1], ['FX', 0], ['FX Caching', 0], ['Custom', 1], ['Arnold', 0], ['Bifrost', 0], ['MASH', 0], ['Motion Graphics', 0], ['XGen', 0]];

const SH = ({ names }: { names: string[] }) => <Cells names={names} w="w-[35px]" s={27} />;
const ShSep = () => <span className="block shrink-0 w-[3px] h-[34px] bg-[#7a7a7a] mx-[4.5px]" />;

const Shelf = () => (
  <div className="flex h-[71px] shrink-0 pt-[1px]">
    <div className="ml-[11px] mt-[1px] flex flex-col items-center justify-between w-[19px] h-[63px] bg-[#3a3a3a] pt-[14px] pb-[10px]">
      <span className="block w-[11px] h-[4px] bg-[#aaa]" />
      <svg viewBox="0 0 24 24" width="14" height="14"><circle cx="12" cy="12" r="6" fill="none" stroke="#b5b5b5" strokeWidth="4" /><path d="M12 1v5M12 18v5M1 12h5M18 12h5M4 4l4 4M16 16l4 4M20 4l-4 4M8 16l-4 4" stroke="#b5b5b5" strokeWidth="2.5" /></svg>
    </div>
    <div className="flex-1 min-w-0 ml-[6px] flex flex-col">
      <div className="flex items-end h-[19px] mr-[5px] mt-[2px] bg-[#3a3a3a] gap-[1px]">
        {TABS.map(([t, s]) => (
          <span key={t} className={`flex items-center h-[19px] px-[11.4px] rounded-t-sm ${s === 2 ? 'bg-[#444] text-[#f2f2f2]' : s === 1 ? 'bg-[#3e3e3e] text-[#c4c4c4]' : 'bg-[#3e3e3e] text-[#8b8b8b]'}`}>{t}</span>
        ))}
      </div>
      <div className="flex items-center h-[40px] ml-[3px]">
        <SH names={['sphere', 'cube', 'cyl', 'cone', 'torus', 'plane', 'disc']} />
        <ShSep />
        <SH names={['ico']} />
        <ShSep />
        <Cells names={['star', 'helix']} w="w-[35px]" s={27} />
        <span className="flex items-center justify-center w-[35px] text-[36px] leading-none font-['Liberation_Serif'] text-[#dd9450]">T</span>
        <span className="flex items-center justify-center w-[35px]"><span className="flex items-center justify-center w-[26px] h-[26px] bg-[#dd9450] text-[#333] text-[12px] font-bold">svg</span></span>
        <ShSep />
        <SH names={['table']} />
        <ShSep />
        <SH names={['locator', 'clockx']} />
        <span className="flex flex-col items-center w-[35px]"><Ic n="snow" s={20} /><span className="text-[10px] leading-[10px] font-bold text-[#3fb5c0] bg-[#3a3a3a] -mt-[3px]">0,0,0</span></span>
        <ShSep />
        <SH names={['combine', 'separate', 'mirror', 'smooth', 'reduce', 'tri', 'quads']} />
        <ShSep />
        <SH names={['extrude', 'bridge', 'bevel', 'append', 'circ', 'fill', 'addDiv', 'weld', 'quad']} />
        <ShSep />
        <SH names={['cut', 'weld', 'quad']} />
        <ShSep />
        <SH names={['green1', 'green2', 'green3', 'green4', 'green5', 'green6', 'green7', 'green8']} />
        <div className="ml-auto mr-[5px] flex flex-col items-center gap-[3px]">
          <Tri className="rotate-180 border-t-[#aaa] border-x-[5px] border-t-[6px]" />
          <span className="block w-[10px] h-[10px] rounded-full bg-[#6a6a6a]" />
          <Tri className="border-t-[#aaa] border-x-[5px] border-t-[6px]" />
        </div>
      </div>
    </div>
  </div>
);

const TCell = ({ n, sel, mt }: { n: string; sel?: boolean; mt: string }) => (
  <span className={`flex items-center justify-center w-[36px] h-[36px] shrink-0 ${mt} ${sel ? 'bg-[#5285a6]' : ''}`}><Ic n={n} s={30} /></span>
);

const Toolbox = () => (
  <div className="flex flex-col items-center w-[41px] shrink-0 pt-[10px]">
    <TCell n="arrow" mt="" />
    <TCell n="lasso" mt="" />
    <TCell n="paint" mt="mt-[2px]" />
    <TCell n="move" sel mt="mt-[1px]" />
    <TCell n="rotate" mt="mt-[1px]" />
    <TCell n="scale" mt="" />
    <TCell n="soft" mt="mt-[39px]" />
    <span className="block w-[36px] h-[2px] bg-[#888] mt-[5px]" />
    <span className="flex items-center justify-center w-[28px] h-[28px] mt-[8px] bg-[#c6c6c6] border-2 border-[#555]"><Ic n="xf" s={18} className="[&_path]:fill-[#444]" /></span>
    <div className="grid grid-cols-2 gap-[1px] mt-[10px] w-[29px]">
      {[0, 1, 2, 3].map((i) => (
        <span key={i} className={`flex items-center justify-center h-[13px] border border-[#c6c6c6] text-[12px] leading-none ${i === 1 ? 'bg-[#c6c6c6] text-[#444]' : 'text-[#c6c6c6]'}`}>{i === 1 ? '◆' : '+'}</span>
      ))}
    </div>
    <div className="flex mt-[7px] w-[29px] h-[29px] gap-[1px]">
      <span className="flex-1 flex items-center justify-center border border-[#c6c6c6] text-[#c6c6c6] text-[13px]">+</span>
      <span className="flex-1 flex items-center justify-center bg-[#c6c6c6] text-[#333] text-[9px]">◆</span>
    </div>
    <span className="flex items-center justify-center w-[36px] h-[36px] bg-[#5285a6] mt-[5px]">
      <svg viewBox="0 0 28 28" width="30" height="30"><path d="M1 1h26v26H1zM4 4h20v20H4z" fill="none" stroke="#ddd" /><path d="M8 8v14M8 12h4M8 17h4" stroke="#ddd" /><path d="M6 6h5v3H6zM9 7h12v2H9zM12 11h10v3H12zM12 16h10v3H12z" fill="#c6c6c6" /></svg>
    </span>
    <span className="block w-[36px] h-[2px] bg-[#888] mt-[6px]" />
    <span className="flex items-center justify-center w-[36px] h-[36px] mt-[5px]">
      <svg viewBox="0 0 36 36" width="36" height="36"><path d="M6 .5H.5v35H6M30 .5h5.5v35H30" stroke="#22e022" fill="none" /><circle cx="17" cy="16" r="8" fill="none" stroke="#c6c6c6" strokeWidth="2" /><path d="M23 22l6 6" stroke="#c6c6c6" strokeWidth="3" /></svg>
    </span>
    <Ic n="m" s={32} className="mt-auto mb-[5px]" />
  </div>
);

type Row = { t: string; ic: string; dim?: boolean; box?: '+' | '-'; child?: boolean; sel?: 1 | 2; last?: boolean };
const ROWS: Row[] = [
  { t: 'persp', ic: 'camera', dim: true },
  { t: 'top', ic: 'camera', dim: true },
  { t: 'front', ic: 'camera', dim: true },
  { t: 'side', ic: 'camera', dim: true },
  { t: 'back', ic: 'camera' },
  { t: 'Pond', ic: 'xf', box: '+' },
  { t: 'Rock1', ic: 'xf', box: '-', sel: 1 },
  ...['Rock15', 'Rock14', 'Rock13', 'Rock12', 'Rock6', 'Rock11', 'Rock4', 'Rock5', 'Rock10', 'Rock9', 'Rock8'].map((t) => ({ t, ic: 'xf', child: true })),
  { t: 'Rock2', ic: 'xfsel', child: true, sel: 2, last: true },
  { t: 'Bench', ic: 'xf', box: '+' },
  { t: 'Windmill', ic: 'ref', box: '+' },
  { t: 'Dirtbed', ic: 'xf', box: '+' },
  { t: 'Curve_1', ic: 'curve' },
  { t: 'Curve_2', ic: 'curve' },
  { t: 'Sky', ic: 'nurbs', dim: true },
  { t: 'Witch', ic: 'xf' },
  { t: 'Dirt_Path', ic: 'xf' },
  { t: 'House4', ic: 'ref', box: '+' },
  { t: 'Island', ic: 'xf' },
  { t: 'Flowers', ic: 'xf' },
  { t: 'Sky_Light', ic: 'light' },
  { t: 'Witch_Character_Reference', ic: 'star6', box: '+' },
  { t: 'Witch_Effectors', ic: 'star6', box: '+' },
  { t: 'chibi:chibiref:Spine', ic: 'joint' },
  { t: 'Witch_Rig_Guides', ic: 'joint', box: '+' },
];

const OutlinerRow = ({ row }: { row: Row }) => (
  <div className={`flex items-center h-[20px] shrink-0 w-[244px] ${row.sel === 2 ? 'bg-[#5285a6] text-white' : row.sel === 1 ? 'bg-[#3f4a58]' : ''} ${row.dim ? 'text-[#6c6c6c]' : ''}`}>
    {row.child ? (
      <>
        <span className={`ml-[25px] w-[1px] bg-[#8a8a8a] ${row.last ? 'h-[10px] self-start' : 'h-[20px]'}`} />
        <span className="block w-[9px] h-px bg-[#8a8a8a]" />
        <span className="block w-[5px] h-[5px] rounded-full bg-[#8a8a8a] -ml-px" />
        <Ic n={row.ic} s={17} className="ml-[9px] mr-[2px]" />
      </>
    ) : (
      <>
        {row.box ? (
          <span className="ml-[21px] flex items-center justify-center w-[9px] h-[9px] border border-[#9a9a9a] text-[9px] leading-none text-[#b5b5b5]">{row.box === '+' ? '+' : '−'}</span>
        ) : <span className="ml-[21px] w-[9px]" />}
        <Ic n={row.ic} s={17} className="ml-[5px] mr-[2px]" />
      </>
    )}
    <span className="whitespace-nowrap">{row.t}</span>
  </div>
);

const Outliner = () => (
  <div className="flex flex-col w-[263px] ml-[3px] shrink-0">
    <span className="flex items-center w-[63px] h-[16px] ml-[1px] bg-[#444] text-[#eee] pl-[10px]">Outliner</span>
    <div className="flex-1 min-h-0 flex flex-col bg-[#444]">
      <div className="flex items-center h-[22px] shrink-0 pl-[10px] gap-[15px]"><span>Display</span><span>Show</span><span>Help</span></div>
      <div className="flex items-center h-[18px] mt-[6px] shrink-0">
        <svg viewBox="0 0 16 16" width="16" height="16" className="ml-[8px]"><path d="M2 5V2h3M11 2h3v3M14 11v3h-3M5 14H2v-3" stroke="#6a6a6a" strokeWidth="2" fill="none" /></svg>
        <div className="ml-[7px] w-[228px] h-[18px] rounded-sm bg-[#2b2b2b] flex items-center justify-between px-[4px] text-[#777]">Search...<Tri className="border-t-[#ccc] border-x-[5px] border-t-[5px]" /></div>
      </div>
      <div className="flex-1 min-h-0 flex mt-[1px] ml-[3px] mr-[4px] bg-[#373737]">
        <div className="flex-1 min-w-0 flex flex-col overflow-hidden text-[#c8c8c8]">
          {ROWS.map((row) => <OutlinerRow key={row.t} row={row} />)}
        </div>
        <div className="flex flex-col items-center w-[10px] mr-[3px]">
          <Tri className="rotate-180 mt-[4px] border-t-[#c8c8c8]" />
          <span className="block w-[10px] h-[452px] mt-[4px] rounded-t bg-[#5a5a5a] rounded-b" />
          <Tri className="mt-auto mb-[5px] border-t-[#c8c8c8]" />
        </div>
      </div>
      <div className="flex items-center h-[13px] ml-[3px] mr-[4px] shrink-0 bg-[#373737] pl-[3px]">
        <Tri className="rotate-90 border-t-[#c8c8c8]" />
        <span className="block ml-[4px] w-[218px] h-[10px] rounded bg-[#5a5a5a]" />
        <Tri className="-rotate-90 ml-[4px] border-t-[#c8c8c8]" />
      </div>
      <div className="h-[6px] shrink-0" />
    </div>
  </div>
);

const V_GROUPS: { n: string[]; sel?: number[] }[] = [
  { n: ['camera', 'camera', 'camera', 'bm', 'film', 'mv', 'paintv'], sel: [5] },
  { n: ['grid', 'film2', 'dot', 'dot2', 'tv', 'cam2', 'tbox'], sel: [0] },
  { n: ['wire', 'solid', 'half', 'wire2', 'chk', 'bulb', 'sph'], sel: [1] },
  { n: ['ball', 'ball2', 'ring', 'sq'] },
  { n: ['selc'] },
  { n: ['pg1', 'pg2', 'pg3'] },
];

type Poly = [string, string];
const BIG: Poly[] = [
  ['1193,610 1246,633 1215,653 1177,658', '#8d8d8d'], ['1157,640 1193,610 1177,658', '#858585'], ['1162,628 1193,610 1157,640', '#6f6f6f'],
  ['1138,655 1162,628 1157,640', '#565656'], ['1138,655 1157,640 1134,687', '#636363'], ['1157,640 1177,658 1183,717', '#6a6a6a'],
  ['1157,640 1183,717 1134,687', '#8c8c8c'], ['1134,687 1183,717 1143,712', '#8f8f8f'], ['1177,658 1215,653 1225,700 1183,717', '#7f7f7f'],
  ['1215,653 1246,633 1225,700', '#7a7a7a'], ['1246,633 1238,725 1225,700', '#3b3b3b'], ['1225,700 1238,725 1210,743 1183,717', '#5d5d5d'],
  ['1183,717 1210,743 1153,762', '#777777'], ['1143,712 1183,717 1153,762 1133,738', '#858585'], ['1134,687 1143,712 1133,738', '#676767'],
  ['1133,738 1153,762 1140,752', '#6a6a6a'], ['1153,762 1210,743 1209,763', '#3a3a3a'], ['1210,743 1238,725 1228,748 1209,763', '#2f2f2f'],
  ['1153,762 1209,763 1175,766', '#000000'],
];
const SEL: Poly[] = [
  ['1293,502 1354,487 1353,511', '#8f8f8f'], ['1293,502 1353,511 1315,552', '#909090'], ['1353,511 1397,540 1385,565 1315,552', '#959595'],
  ['1354,487 1380,513 1397,540 1353,511', '#4a4a4a'], ['1315,552 1385,565 1367,590', '#9a9a9a'], ['1315,552 1367,590 1320,585', '#8a8a8a'],
  ['1320,585 1367,590 1332,655', '#8f8f8f'], ['1320,585 1332,655 1305,650 1289,620', '#8e8e8e'], ['1292,540 1315,552 1298,585', '#4d4d4d'],
  ['1293,502 1315,552 1292,540', '#545454'], ['1292,540 1298,585 1289,620', '#3f3f3f'], ['1298,585 1320,585 1289,620', '#707070'],
  ['1397,540 1412,563 1414,617 1385,565', '#5b5b5b'], ['1367,590 1385,565 1414,617 1378,608', '#5f5f5f'], ['1332,655 1367,590 1378,608', '#6c6c6c'],
  ['1332,655 1414,617 1382,672', '#606060'], ['1332,655 1382,672 1347,670', '#505050'], ['1291,625 1305,650 1332,655 1325,660 1309,653', '#000'], ['1332,655 1355,668 1382,672 1347,670', '#000'],
];
const WIRE = 'M1293 502 1354 487 1380 513 1397 540 1412 563 1414 617 1382 672 1347 670 1305 650 1289 620 1292 540 1293 502M1293 502 1380 513M1354 487 1353 511 1397 540M1293 502 1353 511 1315 552 1293 502M1315 552 1385 565 1397 540M1353 511 1385 565 1367 590 1332 655 1382 672M1315 552 1367 590M1298 585 1367 590 1414 617 1332 655M1292 540 1315 552 1298 585 1289 620 1320 585 1332 655 1305 650M1315 552 1320 585M1385 565 1414 617M1397 540 1414 617M1298 585 1292 540M1320 585 1305 650M1367 590 1382 672M1332 655 1347 670';

const rock = (pts: Poly[], k: string) => pts.map(([p, f], i) => <polygon key={k + i} points={p} fill={f} stroke={f} strokeWidth="0.5" />);
const ROCKS: Poly[] = [
  ['938,296 966,315 945,328', '#838383'], ['938,296 945,328 912,320', '#6f6f6f'], ['966,315 968,335 945,328', '#767676'], ['912,320 945,328 928,352', '#8a8a8a'],
  ['945,328 968,335 952,352 928,352', '#7f7f7f'], ['912,320 928,352 912,340', '#5a5a5a'], ['968,335 955,353 952,352', '#333'], ['928,352 952,352 945,356', '#222'],
  ['1010,302 1025,298 1032,311 1018,320', '#777'], ['1025,298 1033,305 1032,311', '#555'], ['1010,302 1018,320 1012,312', '#8a8a8a'],
  ['955,475 966,470 972,490 963,498', '#7c7c7c'], ['955,475 963,498 957,490', '#8f8f8f'], ['966,470 972,482 972,490', '#5a5a5a'],
  ['1418,468 1430,465 1425,488 1416,485', '#7a7a7a'], ['1425,465 1430,465 1425,488', '#555'],
  ['1274,508 1285,505 1292,512 1282,526 1274,520', '#727272'], ['1285,505 1292,512 1282,526', '#5b5b5b'],
  ['825,552 831,550 833,556 827,558', '#7b7b7b'], ['955,570 960,568 961,573 956,575', '#7c7c7c'],
  ['685,586 692,582 696,587 689,593', '#7b7b7b'], ['498,663 504,660 506,665 500,667', '#7c7c7c'],
  ['965,655 977,648 990,653 989,665 975,668', '#7b7b7b'], ['965,655 975,668 968,665', '#8a8a8a'], ['977,648 990,653 980,657', '#666'], ['975,668 989,665 982,670', '#444'],
  ['762,752 795,733 818,738 805,760', '#7c7c7c'], ['795,733 818,738 828,752 805,760', '#6d6d6d'], ['762,752 805,760 780,785', '#8a8a8a'],
  ['805,760 828,752 810,772 790,785', '#7f7f7f'], ['762,752 780,785 765,770', '#6a6a6a'], ['780,785 805,772 790,787', '#555'],
];

const Viewport = () => (
  <div className="flex-1 min-w-0 ml-[3px] flex flex-col border border-[#7a7a7a] mr-[3px] relative">
    <div className="flex items-center h-[20px] shrink-0 pl-[11px] gap-[15px]">
      {['View', 'Shading', 'Lighting', 'Show', 'Renderer', 'Panels'].map((m) => <span key={m}>{m}</span>)}
    </div>
    <div className="flex items-center h-[19px] shrink-0 pl-[6px]">
      {V_GROUPS.map((g, i) => (
        <React.Fragment key={i}>
          <span className="block w-[2px] h-[14px] bg-[#7a7a7a] mr-[5px] ml-[3px]" />
          {g.n.map((n, j) => (
            <span key={j} className={`flex items-center justify-center w-[19px] h-[18px] ${g.sel?.includes(j) ? 'bg-[#5285a6]' : ''}`}><Ic n={n} s={14} /></span>
          ))}
        </React.Fragment>
      ))}
      <span className="block w-[2px] h-[14px] bg-[#7a7a7a] mr-[5px] ml-[3px]" />
      <span className="flex items-center justify-center w-[19px]"><svg viewBox="0 0 24 24" width="14" height="14"><circle cx="12" cy="12" r="8" fill="none" stroke="#c6c6c6" strokeWidth="5" strokeDasharray="8 3" /></svg></span>
      <span className="ml-[3px] flex items-center justify-center w-[39px] h-[17px] rounded-sm bg-[#2b2b2b] text-[#c8c8c8]">0.00</span>
      <span className="ml-[22px] flex items-center justify-center w-[37px] h-[17px] rounded-sm bg-[#2b2b2b] text-[#c8c8c8]">1.00</span>
      <div className="ml-[4px] flex items-center justify-between w-[217px] h-[17px] rounded-sm bg-[#555]">
        <span className="flex items-center h-full gap-[4px] text-[#d0d0d0]"><span className="flex items-center justify-center w-[17px] h-full bg-[#5285a6]"><svg viewBox="0 0 16 16" width="12" height="12"><circle cx="6" cy="8" r="4" fill="none" stroke="#ddd" /><circle cx="10" cy="8" r="4" fill="none" stroke="#ddd" /></svg></span>ACES 1.0 SDR-video (sRGB)</span>
        <span className="flex items-center justify-center w-[16px] h-full bg-[#666] rounded-r-sm"><Tri className="border-t-[#ccc]" /></span>
      </div>
    </div>
    <div className="flex-1 min-h-0 bg-[#5e5e5e]">
      <svg viewBox="310 190 1325 733" className="w-full h-full block">
        {rock(ROCKS, 'r')}
        {rock(BIG, 'b')}
        {rock(SEL, 's')}
        <path d={WIRE} fill="none" stroke="#5cf0b0" strokeWidth="1" />
        <path d="M1293 502 1292 540 1289 620" fill="none" stroke="#5cf0b0" strokeWidth="2" />
        <path d="M1358 555c4 4 4 10 0 14-5 0-7-4-6-8z" fill="#fff27a" />
        <rect x="1347" y="570.5" width="19" height="19" fill="none" stroke="#56c8e6" strokeWidth="1.2" />
        <path d="M1354 599v30l5 4-5 28-3-28-2-4z" fill="#ff1010" />
        <path d="M1376 583l24 2 1-4 20 4-20 3-1-2z" fill="#0000e8" />
        <rect x="1379" y="607" width="16" height="17" fill="#00e840" />
        <path d="M1385 569h16l-2 9h-14z" fill="#d33636" stroke="#ff4040" />
        <path d="M331 888v-13" stroke="#28e028" strokeWidth="1" /><path d="M331 888l9-5" stroke="#ff2a2a" strokeWidth="1" /><path d="M331 888l-8 6" stroke="#2a2aff" strokeWidth="1.5" />
        <text x="334" y="880" fontSize="7" fill="#28e028" fontFamily="Roboto">y</text>
        <text x="342" y="885" fontSize="7" fill="#ff2a2a" fontFamily="Roboto">x</text>
        <text x="320" y="900" fontSize="7" fill="#2a2aff" fontFamily="Roboto">z</text>
      </svg>
    </div>
  </div>
);

const SelectRow = ({ label, w, extra }: { label: string; w: string; extra?: boolean }) => (
  <div className="flex items-center h-[24px] mb-[4px] pl-[15px] text-[11.5px]">
    <span className="text-[#a9a9a9] whitespace-nowrap">{label}</span>
    <Tri className="ml-[7px]" />
    <span className={`ml-[6px] flex items-center h-full pl-[5px] rounded-sm bg-[#404040] text-[#b5b5b5] ${w}`}>Off</span>
    {extra && <span className="ml-[1px] flex items-center h-full w-[23px] pl-[5px] bg-[#404040] text-[#666]">0</span>}
  </div>
);

const Header = ({ t, open = true, className = '' }: { t: string; open?: boolean; className?: string }) => (
  <div className={`flex items-center h-[20px] rounded-sm bg-[#3a3a3a] pl-[7px] font-bold text-[#a5a5a5] ${className}`}>
    {open ? <Tri className="border-t-[#eee] border-x-[5px] border-t-[6px]" /> : <span className="block w-0 h-0 border-y-[5px] border-l-[6px] border-y-transparent border-l-[#eee]" />}
    <span className={open ? 'ml-[11px]' : 'ml-[20px]'}>{t}</span>
  </div>
);

const ToolBtn = ({ ic, t }: { ic: string; t: string }) => (
  <div className="flex items-center h-[26px] bg-[#5a5a5a] pl-[5px] gap-[8px] text-[#dcdcdc]"><Ic n={ic} s={21} />{t}</div>
);
const BtnGrid = ({ items }: { items: [string, string][] }) => (
  <div className="grid grid-cols-2 gap-[2px] mt-[3px] mb-[9px] ml-[9px] w-[238px]">
    {items.map(([i, t]) => <ToolBtn key={t} ic={i} t={t} />)}
  </div>
);

const Radio = ({ t, on }: { t: string; on?: boolean }) => (
  <div className="flex items-center h-[20px] pl-[13px] text-[#b5b5b5]">
    <span className={`block w-[8px] h-[8px] rounded-full ${on ? 'bg-[#d8d8d8]' : 'bg-[#2b2b2b]'}`} />
    <span className="ml-[11px]">{t}</span>
  </div>
);
const Check = ({ t }: { t: string }) => (
  <div className="flex items-center h-[19px] pl-[18px] text-[#b5b5b5]">
    <span className="flex items-center justify-center w-[13px] h-[13px] rounded-sm bg-[#2b2b2b]">
      <svg viewBox="0 0 12 12" width="11" height="11"><path d="M2 6l3 3 5-6" stroke="#eee" strokeWidth="2" fill="none" /></svg>
    </span>
    <span className="ml-[5px]">{t}</span>
  </div>
);

const Toolkit = () => (
  <div className="flex flex-col w-[262px] shrink-0 bg-[#444] overflow-hidden text-[12px]">
    <div className="flex items-center h-[27px] shrink-0 pl-[11px] gap-[15px] pb-[6px]"><span>Object</span><span>Help</span></div>
    <div className="flex flex-1 min-h-0">
      <div className="flex-1 min-w-0 flex flex-col">
        <div className="flex items-center justify-center ml-[61px] w-[134px] h-[26px] mt-[4px] shrink-0 bg-[#5a5a5a] text-[#eee]">Multi-Component</div>
        <div className="flex items-center h-[36px] mt-[4px] ml-[17px] shrink-0">
          <span className="flex items-center justify-center w-[44px] h-[36px] bg-[#5285a6]"><Ic n="mtObj" s={29} /></span>
          {['mtVert', 'mtEdge', 'mtFace', 'mtUv'].map((n) => <span key={n} className="flex items-center justify-center w-[44.5px] h-[36px]"><Ic n={n} s={29} /></span>)}
        </div>
        <div className="text-center h-[17px] mt-[6px] shrink-0 text-[#a5a5a5] w-[248px]">1 object selected</div>
        <div className="mt-[14px] shrink-0">
          <Radio t="Pick/Marquee" on />
          <Radio t="Drag" />
          <Radio t="Tweak/Marquee" />
        </div>
        <div className="mt-[1px] shrink-0">
          <Check t="Highlight Backfaces" />
          <Check t="Highlight Nearest Component" />
        </div>
        <div className="mt-[9px] shrink-0">
          <SelectRow label="Camera Based Selection" w="flex-1" />
          <SelectRow label="Symmetry" w="flex-1" />
          <SelectRow label="Selection Constraint" w="w-[82px]" extra />
          <SelectRow label="Transform Constraint" w="flex-1" />
        </div>
        <div className="shrink-0 ml-[8px] w-[240px] mt-[5px] mb-[10px]"><Header t="Soft Selection" open={false} /></div>
        <div className="shrink-0 ml-[9px] w-[238px]"><Header t="Mesh" /></div>
        <BtnGrid items={[['combine', 'Combine'], ['separate', 'Separate'], ['smooth', 'Smooth'], ['boolean', 'Boolean']]} />
        <div className="shrink-0 ml-[9px] w-[238px]"><Header t="Components" /></div>
        <BtnGrid items={[['extrude', 'Extrude'], ['bevel', 'Bevel'], ['bridge', 'Bridge'], ['addDivPlus', 'Add Divisions']]} />
        <div className="shrink-0 ml-[9px] w-[238px]"><Header t="Tools" /></div>
        <BtnGrid items={[['cut', 'Multi-Cut'], ['weld', 'Target Weld'], ['connect', 'Connect'], ['quadDraw', 'Quad Draw']]} />
        <div className="shrink-0 ml-[6px] w-[241px]"><Header t="Move Settings" /></div>
        <div className="flex mt-[3px] ml-[8px] w-[240px] h-[72px] shrink-0">
          <div className="flex flex-col w-[123px]">
            <div className="flex items-center h-[24px] mt-[9px] pl-[7px]">
              <Tri />
              <span className="ml-[10px] flex items-center h-full w-[99px] pl-[5px] rounded-sm bg-[#404040] text-[#a5a5a5]">Object</span>
            </div>
            <div className="flex items-center justify-center h-[23px] mt-[16px] ml-[2px] bg-[#5a5a5a] text-[#dcdcdc]">Edit Pivot</div>
          </div>
          <span className="block w-[15px] h-[72px] ml-[8px] bg-[#555]" />
          <div className="flex flex-col gap-[4px] ml-[3px] mt-[3px]">
            {([['X:', '-10.17'], ['Y:', '-113.84'], ['Z:', '-53.69']] as const).map(([a, v]) => (
              <div key={a} className="flex items-center h-[20px]">
                <span className={`flex items-center justify-center w-[21px] h-[22px] font-bold ${a === 'Y:' ? 'bg-[#4cff8f] text-[#222]' : 'bg-[#5a5a5a] text-[#eee]'}`}>{a}</span>
                <span className="ml-[3px] flex items-center w-[65px] h-[20px] rounded-sm pl-[5px] bg-[#2b2b2b] text-[#d0d0d0]">{v}</span>
              </div>
            ))}
          </div>
        </div>
        <div className="flex items-center h-[12px] mt-auto mb-[8px] ml-[5px] w-[242px] bg-[#373737] pl-[2px] shrink-0">
          <Tri className="rotate-90 border-t-[#c8c8c8]" />
          <span className="block ml-[4px] w-[211px] h-[10px] rounded bg-[#5a5a5a]" />
          <Tri className="-rotate-90 ml-[7px] border-t-[#c8c8c8]" />
        </div>
      </div>
      <div className="flex flex-col items-center w-[10px] mr-[4px] shrink-0">
        <Tri className="rotate-180 border-t-[#c8c8c8]" />
        <span className="block w-[10px] h-[690px] mt-[3px] rounded bg-[#5a5a5a]" />
        <Tri className="mt-[20px] border-t-[#c8c8c8]" />
      </div>
    </div>
  </div>
);

const SideTabs = () => (
  <div className="flex flex-col w-[17px] shrink-0 bg-[#3a3a3a]">
    <span className="flex justify-center [writing-mode:vertical-rl] h-[158px] pt-[10px] text-[#8b8b8b] whitespace-nowrap">Channel Box / Layer Editor</span>
    <span className="flex justify-center [writing-mode:vertical-rl] h-[108px] pt-[10px] text-[#8b8b8b] border-t border-[#444] whitespace-nowrap">Attribute Editor</span>
    <span className="flex justify-center [writing-mode:vertical-rl] h-[113px] pt-[7px] bg-[#444] text-[#e0e0e0] whitespace-nowrap">Modeling Toolkit</span>
  </div>
);

const FRAMES = Array.from({ length: 23 }, (_, i) => (i + 1) * 5);

const TimeSlider = () => (
  <div className="flex h-[43px] shrink-0 pt-[9px] border-t border-[#3a3a3a]">
    <Grip className="ml-[2px] h-[30px]" />
    <div className="flex items-stretch ml-[5px] w-[1612px] h-[30px] bg-[#2b2b2b] relative pl-[61px]">
      {FRAMES.map((f) => (
        <div key={f} className="flex flex-col w-[66.57px] shrink-0">
          <span className="pl-[3px] h-[13px] text-[11px] leading-[13px] text-[#777]">{f}</span>
          <span className="block w-[2px] h-[13px] bg-[#8c8c8c]" />
        </div>
      ))}
      <div className="flex flex-col items-start w-[20px] shrink-0 text-[11px] leading-[13px]">
        <span className="h-[13px] w-[12px] bg-[#666] text-[#bbb]">120</span>
        <span className="w-[12px] bg-[#666] text-white leading-[17px]">120</span>
      </div>
    </div>
    <span className="ml-[8px] flex items-center w-[87px] h-[18px] mt-[6px] pl-[4px] rounded-sm bg-[#2b2b2b] text-[#c0c0c0]">120</span>
    <div className="ml-[9px] flex items-center h-[24px] mt-[3px]">
      {['skipb', 'stepb', 'keyb', 'playb', 'playf', 'keyf', 'stepf', 'skipf'].map((n) => (
        <span key={n} className="flex items-center justify-center w-[23px]">
          <svg viewBox="0 0 16 16" width="16" height="18">
            {n === 'skipb' && <path d="M1 2h2v12H1zM8 2v12L3 8zM14 2v12L9 8z" fill="#c6c6c6" />}
            {n === 'stepb' && <path d="M3 2h2v12H3zM13 1v14L6 8z" fill="#c6c6c6" />}
            {n === 'keyb' && <><path d="M13 1v14L6 8z" fill="#c6c6c6" /><path d="M3 0h3v16H3z" fill="#e0703a" /></>}
            {n === 'playb' && <path d="M14 0v16L3 8z" fill="#c6c6c6" />}
            {n === 'playf' && <path d="M2 0v16l11-8z" fill="#c6c6c6" />}
            {n === 'keyf' && <><path d="M3 1v14l7-7z" fill="#c6c6c6" /><path d="M10 0h3v16h-3z" fill="#e0703a" /></>}
            {n === 'stepf' && <path d="M3 1v14l7-7zM11 2h2v12h-2z" fill="#c6c6c6" />}
            {n === 'skipf' && <path d="M2 2v12l5-6zM8 2v12l5-6zM13 2h2v12h-2z" fill="#c6c6c6" />}
          </svg>
        </span>
      ))}
    </div>
  </div>
);

const FrameInput = ({ v, className = '' }: { v: string; className?: string }) => (
  <span className={`flex items-center w-[88px] h-[25px] pl-[5px] rounded-sm bg-[#2b2b2b] text-[#c0c0c0] ${className}`}>{v}</span>
);

const RangeSlider = () => (
  <div className="flex items-center h-[36px] shrink-0 border-t-[3px] border-[#3a3a3a] box-border">
    <Grip className="ml-[2px] h-[22px]" />
    <FrameInput v="1" className="ml-[6px]" />
    <FrameInput v="1" className="ml-[8px]" />
    <div className="ml-[8px] flex items-center w-[930px] h-[25px] bg-[#3c3c3c] pl-[5px]">
      <div className="flex items-center justify-between w-[557px] h-[21px] rounded-sm bg-[#5e5e5e] px-[3px] text-[#ccc]">
        <span className="flex items-center gap-[4px]"><span className="block w-[14px] h-[17px] rounded bg-[#8f8f8f]" />1</span>
        <span className="flex items-center gap-[4px]">120<span className="block w-[14px] h-[17px] rounded bg-[#8f8f8f]" /></span>
      </div>
    </div>
    <FrameInput v="120" className="-ml-[8px]" />
    <FrameInput v="200" className="ml-[8px]" />
    <Sep className="ml-[5px] h-[20px]" />
    <Ic n="bookmark" s={18} className="ml-[14px]" />
    <Sep className="ml-[10px] h-[20px]" />
    <Tri className="ml-[14px]" />
    <span className="ml-[9px] flex items-center w-[101px] h-[25px] pl-[6px] rounded-sm border border-[#505050] text-[#c0c0c0]">No Character Set</span>
    <Tri className="ml-[11px]" />
    <span className="ml-[7px] flex items-center w-[102px] h-[25px] pl-[6px] rounded-sm border border-[#505050] text-[#c0c0c0]">No Anim Layer</span>
    <Sep className="ml-[10px] h-[20px]" />
    <div className="ml-[11px] flex items-center justify-between w-[95px] h-[21px] rounded-sm bg-[#5a5a5a] pl-[4px] text-[#c8c8c8]">
      24 fps
      <span className="flex items-center justify-center w-[20px] h-full border-l border-[#444]"><Tri className="border-t-[#ccc] border-x-[5px] border-t-[6px]" /></span>
    </div>
    <span className="ml-[11px] flex items-center"><Ic n="loop" s={20} /></span>
    <span className="ml-[7px] flex items-center justify-center w-[24px] h-[25px] bg-[#5285a6]"><Ic n="cache" s={19} /></span>
    <Sep className="ml-[9px] h-[20px]" />
    <Ic n="speaker" s={20} className="ml-[11px]" />
    <Ic n="clockdash" s={20} className="ml-[8px]" />
    <Ic n="runner" s={20} className="ml-[9px]" />
  </div>
);

const CommandLine = () => (
  <div className="flex flex-1 min-h-0 border-t-[3px] border-[#3a3a3a] overflow-hidden">
    <span className="ml-[11px] mt-[3px] flex items-center justify-center w-[15px] h-[15px] rounded-full bg-[#c6c6c6] text-[#444] text-[11px] font-bold">?</span>
    <span className="ml-auto mt-[3px] text-[#d5d5d5] leading-[14px]">MEL</span>
    <span className="ml-[14px] mt-[1px] w-[409px] h-[20px] bg-[#2b2b2b] rounded-sm" />
    <span className="ml-[8px] mt-[1px] w-[594px] h-[20px] bg-[#2b2b2b] rounded-sm" />
    <svg viewBox="0 0 24 24" width="20" height="20" className="mx-[6px]"><path d="M2 2h20v22H2z" fill="#c6c6c6" /><path d="M4 7h16v17H4z" fill="#444" /><path d="M7 20l4-9h2l4 9" stroke="#c6c6c6" strokeWidth="1.5" fill="none" /></svg>
  </div>
);

export default function App() {
  return (
    <div className="flex flex-col w-[1917px] h-[1025px] overflow-hidden bg-[#444444] text-[#cdcdcd] text-[11.5px] font-['Roboto',sans-serif]">
      <TitleBar />
      <MenuBar />
      <StatusLine />
      <Shelf />
      <div className="flex h-[775px] shrink-0">
        <Toolbox />
        <Outliner />
        <Viewport />
        <Toolkit />
        <SideTabs />
      </div>
      <TimeSlider />
      <RangeSlider />
      <CommandLine />
    </div>
  );
}
